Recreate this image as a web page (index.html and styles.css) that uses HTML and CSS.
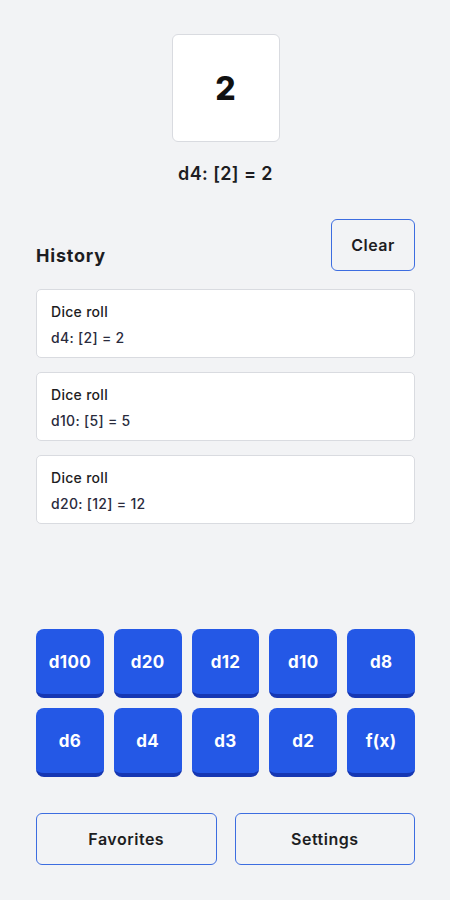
FILE: index.html
```html
<!DOCTYPE html>
<html>
<head>
<meta charset="utf-8">
<link rel="stylesheet" href="styles.css">
</head>
<body>
<div class="app">
  <div class="result">
    <div class="result-box">2</div>
    <div class="result-text">d4: [2] = 2</div>
  </div>
  <div class="history-head">
    <div class="history-title">History</div>
    <button class="outline-btn clear">Clear</button>
  </div>
  <div class="history-list">
    <div class="card"><div class="card-title">Dice roll</div><div class="card-body">d4: [2] = 2</div></div>
    <div class="card"><div class="card-title">Dice roll</div><div class="card-body">d10: [5] = 5</div></div>
    <div class="card"><div class="card-title">Dice roll</div><div class="card-body">d20: [12] = 12</div></div>
  </div>
  <div class="spacer"></div>
  <div class="dice-grid">
    <button class="die">d100</button>
    <button class="die">d20</button>
    <button class="die">d12</button>
    <button class="die">d10</button>
    <button class="die">d8</button>
    <button class="die">d6</button>
    <button class="die">d4</button>
    <button class="die">d3</button>
    <button class="die">d2</button>
    <button class="die">f(x)</button>
  </div>
  <div class="bottom-row">
    <button class="outline-btn wide">Favorites</button>
    <button class="outline-btn wide">Settings</button>
  </div>
</div>
</body>
</html>
```
FILE: styles.css
```css
* { box-sizing: border-box; }
html, body {
  margin: 0;
  padding: 0;
  background: #f2f3f5;
  font-family: Inter, "Noto Sans", sans-serif;
  color: #1b1b1f;
}
.app {
  width: 450px;
  height: 900px;
  padding: 34px 35px 0 36px;
  display: flex;
  flex-direction: column;
}
.result {
  display: flex;
  flex-direction: column;
  align-items: center;
}
.result-box {
  width: 108px;
  height: 108px;
  background: #fff;
  border: 1px solid #d9dbe0;
  border-radius: 6px;
  display: flex;
  align-items: center;
  justify-content: center;
  font-size: 32px;
  font-weight: 800;
  color: #111;
}
.result-text {
  margin-top: 21px;
  font-size: 18px;
  font-weight: 600;
  letter-spacing: 0.4px;
  color: #1d1d22;
}
.history-head {
  margin-top: 35px;
  display: flex;
  justify-content: space-between;
  align-items: flex-end;
}
.history-title {
  font-size: 18px;
  font-weight: 700;
  letter-spacing: 0.8px;
  margin-bottom: 5px;
  color: #1d1d22;
}
button {
  font-family: inherit;
}
.outline-btn {
  background: transparent;
  border: 1.5px solid #3d6de0;
  border-radius: 6px;
  height: 52px;
  font-size: 16px;
  font-weight: 600;
  letter-spacing: 0.5px;
  color: #1d1d22;
  padding: 0;
}
.clear {
  width: 84px;
}
.history-list {
  margin-top: 18px;
  display: flex;
  flex-direction: column;
  gap: 14px;
}
.card {
  background: #fff;
  border: 1px solid #d9dbe0;
  border-radius: 5px;
  height: 69px;
  padding: 13px 14px 0;
}
.card-title {
  font-size: 14px;
  font-weight: 500;
  letter-spacing: 0.3px;
  color: #1d1d22;
}
.card-body {
  margin-top: 9px;
  font-size: 14px;
  font-weight: 500;
  letter-spacing: 0.3px;
  color: #2a2b3d;
}
.spacer { flex: 1; }
.dice-grid {
  display: grid;
  grid-template-columns: repeat(5, 1fr);
  column-gap: 10px;
  row-gap: 10px;
}
.die {
  height: 69px;
  background: #2458e6;
  border: none;
  border-bottom: 4px solid #1637b3;
  border-radius: 8px;
  color: #fff;
  font-size: 17px;
  font-weight: 700;
  letter-spacing: 0.3px;
  padding: 0;
}
.bottom-row {
  margin-top: 36px;
  margin-bottom: 35px;
  display: flex;
  gap: 18px;
}
.wide {
  flex: 1;
}
```
